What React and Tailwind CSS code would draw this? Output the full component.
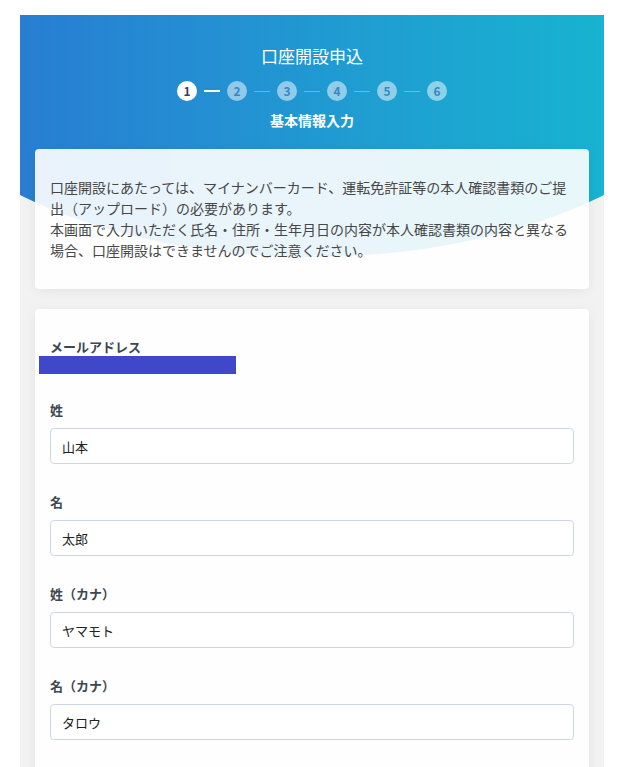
import React from 'react';

const STEPS = [1, 2, 3, 4, 5, 6];

const FIELDS = [
  { label: '姓', value: '山本' },
  { label: '名', value: '太郎' },
  { label: '姓（カナ）', value: 'ヤマモト' },
  { label: '名（カナ）', value: 'タロウ' },
];

const Stepper = ({ current = 1 }) => (
  <div className="flex items-center justify-center">
    {STEPS.map((n, idx) => (
      <React.Fragment key={n}>
        {idx > 0 && (
          <div className={`mx-[7px] w-[16px] ${idx === current ? 'h-[1.5px] bg-white' : 'h-px bg-white/30'}`} />
        )}
        <div
          className={`flex h-[20px] w-[20px] items-center justify-center rounded-full text-[12px] font-bold leading-none ${
            n === current ? 'bg-white text-[#3d3f66]' : 'bg-white/50 text-[#3b86c4]'
          }`}
        >
          {n}
        </div>
      </React.Fragment>
    ))}
  </div>
);

const Field = ({ label, value }) => (
  <div className="mt-[29px] first:mt-0">
    <label className="block text-[13px] font-bold leading-[18px] text-[#3d4852]">{label}</label>
    <input
      type="text"
      readOnly
      value={value}
      className="mt-[9px] block h-[36px] w-full rounded-[4px] border border-[#cdd7e4] bg-white px-[11px] text-[13px] text-[#222] outline-none"
    />
  </div>
);

export default function App() {
  return (
    <div
      className="min-h-[767px] bg-white pt-[15px]"
      style={{ fontFamily: '"Noto Sans CJK JP", "Noto Sans", sans-serif' }}
    >
      <div className="relative mx-[20px] min-h-[752px] overflow-hidden bg-[#f2f2f2]">
        {/* curved gradient header */}
        <div className="absolute left-[-146px] top-[-100px] h-[342px] w-[876px] rounded-bl-[50%_243px] rounded-br-[50%_243px] bg-linear-to-r from-[#2c6fd2] to-[#12c0cf]" />

        <div className="relative px-[15px] pt-[29px]">
          <h1 className="text-center text-[17px] font-normal leading-[24px] text-white">口座開設申込</h1>
          <div className="mt-[13px]">
            <Stepper current={1} />
          </div>
          <p className="mt-[9px] text-center text-[14px] font-bold leading-[20px] text-white">基本情報入力</p>

          <div className="mt-[19px] rounded-[4px] bg-white/90 px-[15px] py-[28px] text-[14px] leading-[21px] text-[#474747] shadow-[0_2px_12px_rgba(0,0,0,0.06)]">
            <p>
              口座開設にあたっては、マイナンバーカード、運転免許証等の本人確認書類のご提出（アップロード）の必要があります。
            </p>
            <p>本画面で入力いただく氏名・住所・生年月日の内容が本人確認書類の内容と異なる場合、口座開設はできませんのでご注意ください。</p>
          </div>

          <div className="mt-[20px] rounded-[4px] bg-white/90 px-[15px] pb-[40px] pt-[29px] shadow-[0_2px_12px_rgba(0,0,0,0.06)]">
            <div>
              <p className="text-[13px] font-bold leading-[18px] text-[#3d4852]">メールアドレス</p>
              <div className="ml-[-11px] h-[18px] w-[197px] bg-[#4047c9]" />
            </div>
            <div className="mt-[27px]">
              {FIELDS.map((f) => (
                <Field key={f.label} label={f.label} value={f.value} />
              ))}
            </div>
          </div>
        </div>
      </div>
    </div>
  );
}
